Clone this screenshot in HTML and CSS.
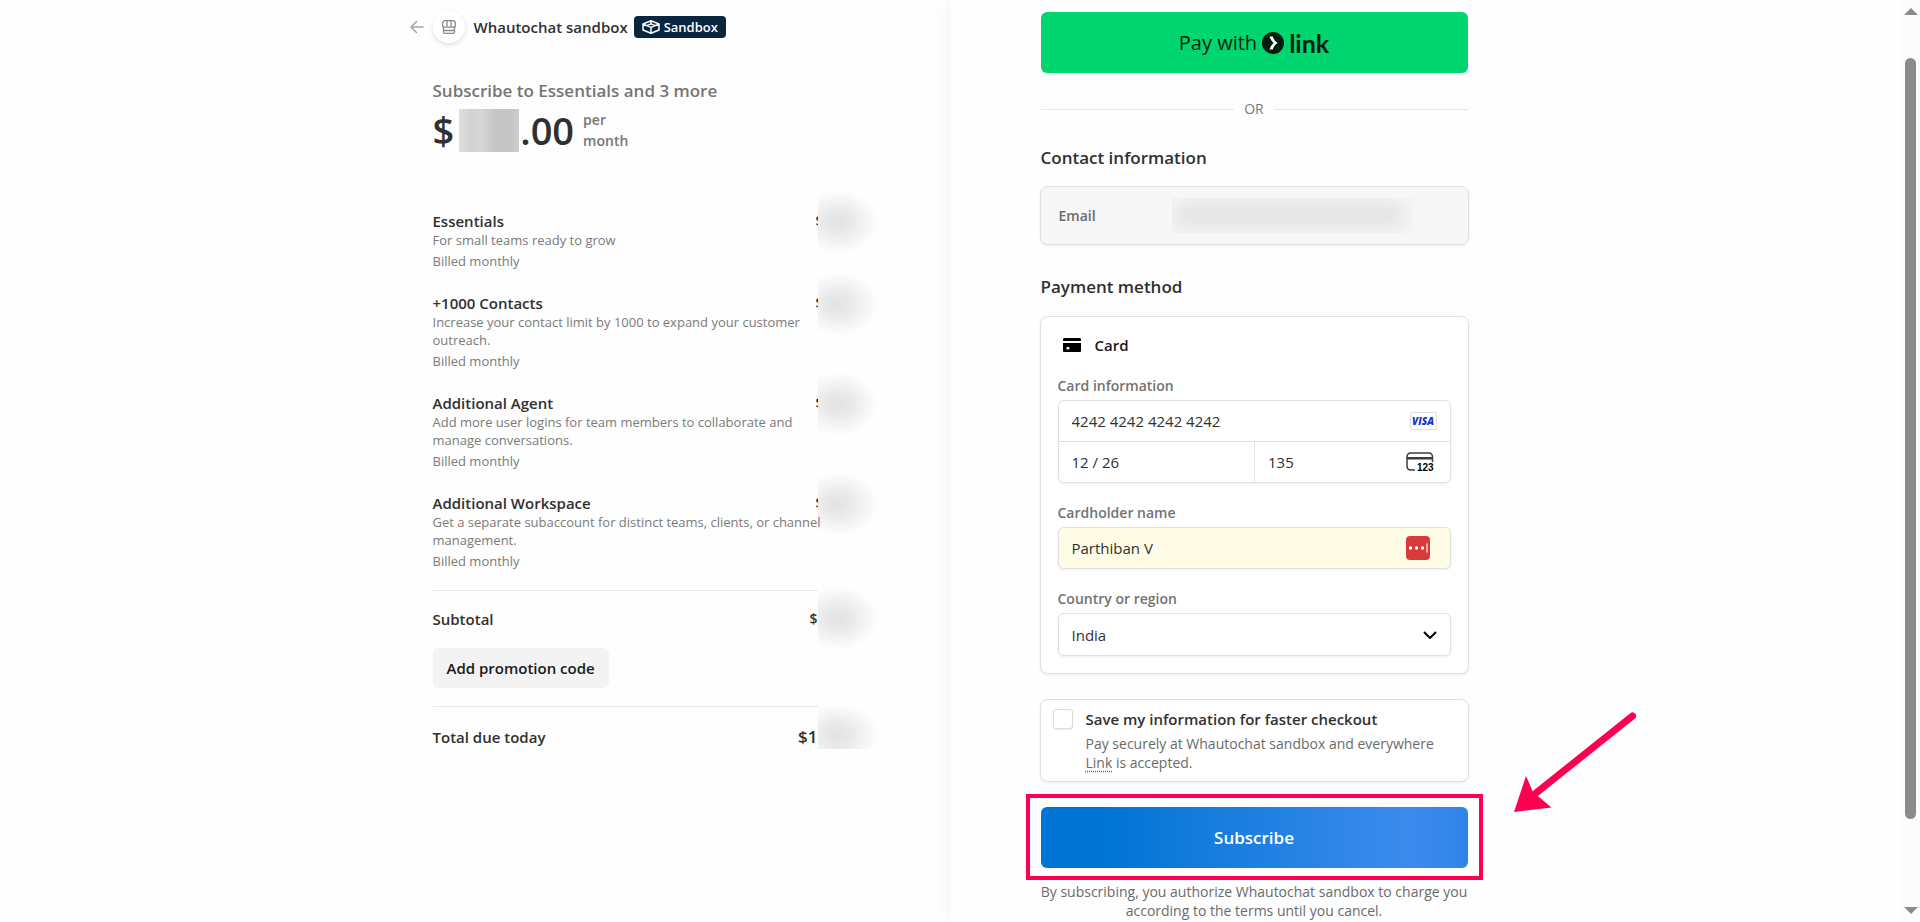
FILE: index.html
```html
<!DOCTYPE html>
<html lang="en">
  <head>
    <meta charset="UTF-8" />
    <meta name="viewport" content="width=device-width, initial-scale=1" />
    <title>Whautochat sandbox</title>
    <link rel="stylesheet" href="styles.css" />
  </head>
  <body>
    <div class="checkout">
      <section class="panel summary-panel">
        <div class="summary">
          <header class="merchant">
            <a href="#" class="back" aria-label="Back">
              <svg width="14" height="14" viewBox="0 0 14 14" fill="none" stroke="#a3a3a3" stroke-width="1.5" stroke-linecap="round" stroke-linejoin="round">
                <path d="M13 7H1M6.500 1.500L1 7l5.500 5.500" />
              </svg>
            </a>
            <span class="merchant-logo">
              <svg width="14" height="14" viewBox="0 0 14 14" fill="none" stroke="#8a8a8a" stroke-width="1.300" stroke-linejoin="round">
                <path d="M2.200.7h9.600l1.500 1.500v4a1 1 0 0 1-1 1H1.700a1 1 0 0 1-1-1v-4z" />
                <path d="M5 .7v6M9 .7v6M1.500 7v5.300a1 1 0 0 0 1 1h9a1 1 0 0 0 1-1V7M1.500 10.500h11" />
              </svg>
            </span>
            <span class="merchant-name">Whautochat sandbox</span>
            <span class="badge">
              <svg width="18" height="14" viewBox="0 0 18 14" fill="none" stroke="#fff" stroke-width="1.500" stroke-linejoin="round">
                <path d="M9 .8L17 4v6l-8 3.200L1 10V4zM1 4l8 3.400L17 4M9 7.400V13M5 5.600l4-1.700 4 1.700M9 .8v3" />
              </svg>
              Sandbox
            </span>
          </header>

          <h1 class="plan">Subscribe to Essentials and 3 more</h1>
          <div class="price">
            <span class="price-value">$<span class="price-hidden"></span>.00</span>
            <span class="price-period">per<br />month</span>
          </div>

          <div class="items">
            <div class="line item">
              <div class="line-body">
                <div class="row"><h2>Essentials</h2><span class="amount">$</span></div>
                <p>For small teams ready to grow</p>
                <p class="billing">Billed monthly</p>
              </div>
              <span class="hidden-amount"></span>
            </div>
            <div class="line item">
              <div class="line-body">
                <div class="row"><h2>+1000 Contacts</h2><span class="amount">$</span></div>
                <p>Increase your contact limit by 1000 to expand your customer outreach.</p>
                <p class="billing">Billed monthly</p>
              </div>
              <span class="hidden-amount"></span>
            </div>
            <div class="line item">
              <div class="line-body">
                <div class="row"><h2>Additional Agent</h2><span class="amount">$</span></div>
                <p>Add more user logins for team members to collaborate and manage conversations.</p>
                <p class="billing">Billed monthly</p>
              </div>
              <span class="hidden-amount"></span>
            </div>
            <div class="line item">
              <div class="line-body">
                <div class="row"><h2>Additional Workspace</h2><span class="amount">$</span></div>
                <p>Get a separate subaccount for distinct teams, clients, or channel management.</p>
                <p class="billing">Billed monthly</p>
              </div>
              <span class="hidden-amount"></span>
            </div>
          </div>

          <div class="line subtotal">
            <div class="line-body">
              <div class="row"><h2>Subtotal</h2><span class="amount">$</span></div>
              <button type="button" class="promo">Add promotion code</button>
            </div>
            <span class="hidden-amount"></span>
          </div>
          <div class="line total">
            <div class="line-body">
              <div class="row"><h2>Total due today</h2><span class="amount">$1</span></div>
            </div>
            <span class="hidden-amount"></span>
          </div>
        </div>
      </section>

      <main class="panel payment-panel">
        <form class="payment">
          <button type="button" class="link-pay">
            Pay with
            <svg width="22" height="22" viewBox="0 0 22 22">
              <circle cx="11" cy="11" r="11" fill="#011e0f" />
              <path d="M7.500 4.500h3.300c.7 2.700 2.500 5 4.900 6.500-2.400 1.500-4.200 3.800-4.900 6.500H7.500c.8-2.700 2.300-4.900 4.300-6.500-2-1.600-3.500-3.800-4.300-6.500z" fill="#fff" />
            </svg>
            <b>link</b>
          </button>
          <div class="or">OR</div>

          <h2 class="section-title">Contact information</h2>
          <div class="box contact">
            <span>Email</span>
            <span class="hidden-email"></span>
          </div>

          <h2 class="section-title">Payment method</h2>
          <div class="box method">
            <div class="method-title">
              <svg width="18" height="14" viewBox="0 0 18 14">
                <path d="M1 0h16a1 1 0 0 1 1 1v2H0V1a1 1 0 0 1 1-1z" />
                <path fill-rule="evenodd" d="M0 5h18v8a1 1 0 0 1-1 1H1a1 1 0 0 1-1-1zM4.500 9a1.200 1.200 0 0 0 0 2.400h.9a1.200 1.200 0 0 0 0-2.400z" />
              </svg>
              Card
            </div>

            <label for="card-number">Card information</label>
            <div class="field">
              <div class="input-row">
                <input type="text" id="card-number" value="4242 4242 4242 4242" />
                <span class="visa">VISA</span>
              </div>
              <div class="card-bottom">
                <div class="input-row"><input type="text" aria-label="Expiration" value="12 / 26" /></div>
                <div class="input-row cvc">
                  <input type="text" aria-label="CVC" value="135" />
                  <svg width="28" height="20" viewBox="0 0 28 20">
                    <path d="M9 18H4.500A3.500 3.500 0 0 1 1 14.500v-10A3.500 3.500 0 0 1 4.500 1h18.500A3.500 3.500 0 0 1 26.500 4.500V10" fill="none" stroke="#3c3c3c" stroke-width="1.500" />
                    <path d="M1 5h25.500v2.500H1z" fill="#3c3c3c" />
                    <text x="11" y="19" class="cvc-text">123</text>
                  </svg>
                </div>
              </div>
            </div>

            <label for="holder">Cardholder name</label>
            <div class="field input-row autofilled">
              <input type="text" id="holder" value="Parthiban V" />
              <svg width="24" height="24" viewBox="0 0 24 24">
                <rect width="24" height="24" rx="4" fill="#d73c3b" />
                <circle cx="4.500" cy="12" r="1.700" fill="#fff" />
                <circle cx="10.500" cy="12" r="1.700" fill="#fff" />
                <circle cx="16.500" cy="12" r="1.700" fill="#fff" />
                <path d="M21 7.500v9" stroke="#fff" stroke-width="1.200" />
              </svg>
            </div>

            <label for="country">Country or region</label>
            <div class="field input-row country">
              <select id="country">
                <option>India</option>
              </select>
              <svg width="14" height="8" viewBox="0 0 14 8" fill="none" stroke="#000" stroke-width="2">
                <path d="M1 1l6 6 6-6" />
              </svg>
            </div>
          </div>

          <div class="box save">
            <input type="checkbox" id="save-info" />
            <div>
              <label for="save-info">Save my information for faster checkout</label>
              <p>Pay securely at Whautochat sandbox and everywhere <a href="#">Link</a> is accepted.</p>
            </div>
          </div>

          <div class="submit">
            <button type="submit">Subscribe</button>
            <svg class="arrow" width="124" height="102" viewBox="0 0 124 102" fill="#ff0051">
              <path d="M118.500 4L22 81" stroke="#ff0051" stroke-width="7" stroke-linecap="round" />
              <path d="M0 100L12 64 19 80 37.500 95.500z" />
            </svg>
          </div>
          <p class="terms">By subscribing, you authorize Whautochat sandbox to charge you according to the terms until you cancel.</p>
        </form>
      </main>
    </div>

    <div class="scrollbar" aria-hidden="true">
      <span class="scroll-up"></span>
      <span class="scroll-thumb"></span>
      <span class="scroll-down"></span>
    </div>
  </body>
</html>
```

FILE: styles.css
```css
* {
  box-sizing: border-box;
}

body {
  margin: 0;
  height: 100vh;
  overflow: hidden;
  font-family: "Open Sans", "Noto Sans", sans-serif;
  font-size: 14px;
  line-height: 20px;
  color: #303030;
  background-color: #fefefe;
}

h1,
h2,
p {
  margin: 0;
}

h2 {
  font-size: 15px;
  font-weight: 600;
  line-height: 20px;
}

button,
input,
select {
  font-family: inherit;
}

.checkout {
  display: flex;
  min-height: 100vh;
  padding-right: 19px;
}

.panel {
  flex: none;
  width: 50%;
}

/* order summary */
.summary-panel {
  display: flex;
  justify-content: flex-end;
  padding: 10px 73px 0 0;
}

.summary {
  width: 100%;
  max-width: 445px;
}

.merchant {
  display: flex;
  align-items: center;
  height: 34px;
  margin-left: -23px;
}

.back {
  display: flex;
  margin-right: 9px;
}

.merchant-logo {
  display: flex;
  align-items: center;
  justify-content: center;
  width: 32px;
  height: 32px;
  margin-right: 9px;
  border-radius: 50%;
  background-color: #fff;
  box-shadow: 0 2px 5px rgba(0, 0, 0, 0.12);
}

.merchant-name {
  margin-right: 6px;
  font-size: 15px;
  font-weight: 600;
}

.badge {
  display: flex;
  align-items: center;
  gap: 4px;
  height: 22px;
  padding: 0 8px;
  border-radius: 4px;
  font-size: 13px;
  font-weight: 600;
  color: #fff;
  background-color: #0a2540;
}

.plan {
  margin-top: 35px;
  font-size: 17px;
  font-weight: 600;
  line-height: 24px;
  color: #757575;
}

.price {
  display: flex;
  align-items: center;
  gap: 9px;
  height: 54px;
}

.price-value {
  display: flex;
  align-items: center;
  font-size: 38px;
  font-weight: 600;
  line-height: 54px;
}

.price-hidden {
  width: 60px;
  height: 43px;
  margin: 0 1px 0 5px;
  background: linear-gradient(90deg, #dedede, #d2d2d2 20%, #d6d6d6 35%, #c6c6c6 60%, #c4c4c4 85%, #cecece);
}

.price-period {
  font-size: 14px;
  font-weight: 600;
  line-height: 21px;
  color: #757575;
}

.items {
  margin-top: 54px;
}

.line {
  display: grid;
  grid-template-columns: 1fr 60px;
}

.item {
  padding-bottom: 23px;
}

.item:last-child {
  padding-bottom: 20px;
}

/* descriptions may run slightly into the amounts column */
.item p {
  position: relative;
  z-index: 1;
  margin-right: -8px;
  font-size: 13px;
  line-height: 18px;
  color: #7a7a7a;
}

.item .billing {
  padding-top: 3px;
}

.row {
  display: flex;
  justify-content: space-between;
}

.amount {
  font-weight: 600;
}

.item .amount {
  margin-right: -6px;
}

/* sits on top of the amount's digits */
.hidden-amount {
  position: relative;
  height: 62px;
  margin-top: -20px;
  background: radial-gradient(ellipse 40px 32px at 20px 50%, #e3e3e3, #e9e9e9 35%, #f6f6f6 75%, #fefefe);
}

.subtotal .line-body,
.total .line-body {
  border-top: 1px solid #e6e6e6;
}

.subtotal .line-body {
  padding: 18px 0;
}

.subtotal .hidden-amount {
  margin-top: -3px;
}

.promo {
  height: 40px;
  margin-top: 19px;
  padding: 0 14px;
  border: none;
  border-radius: 6px;
  font-size: 15px;
  font-weight: 600;
  color: #1a1a1a;
  background-color: #f3f3f3;
}

.total .line-body {
  padding-top: 20px;
}

.total .amount {
  font-size: 17px;
}

.total .hidden-amount {
  height: 44px;
  margin-top: -1px;
  background: radial-gradient(ellipse 40px 32px at 20px 30px, #e3e3e3, #e9e9e9 35%, #f6f6f6 75%, #fefefe);
}

/* payment form */
.payment-panel {
  padding: 12px 90px 0;
  box-shadow: -6px 0 16px rgba(0, 0, 0, 0.03);
}

.payment {
  max-width: 427px;
}

.link-pay {
  display: flex;
  align-items: center;
  justify-content: center;
  gap: 5px;
  width: 100%;
  height: 61px;
  border: none;
  border-radius: 6px;
  font-size: 20px;
  font-weight: 500;
  color: #011e0f;
  background-color: #00d66f;
}

.link-pay b {
  font-family: Lato, sans-serif;
  font-size: 25px;
  line-height: 26px;
}

.or {
  display: flex;
  align-items: center;
  gap: 10px;
  margin: 26px 0 27px;
  color: #7a7a7a;
}

.or::before,
.or::after {
  content: "";
  flex: 1;
  height: 1px;
  background-color: #e6e6e6;
}

.section-title {
  font-size: 17px;
  font-weight: 600;
  line-height: 24px;
}

.box {
  margin: 0 -1px;
  border: 1px solid #e0e0e0;
  border-radius: 8px;
  background-color: #fff;
  box-shadow: 0 1px 3px rgba(0, 0, 0, 0.08);
}

.contact {
  display: flex;
  align-items: center;
  height: 59px;
  margin-top: 16px;
  margin-bottom: 30px;
  padding: 0 55px 0 18px;
  font-weight: 600;
  color: #6a6a6a;
  background-color: #f7f7f7;
}

.hidden-email {
  width: 241px;
  height: 35px;
  margin-left: auto;
  background-color: #e4e4e4;
  box-shadow: inset -4px 0 18px 5px #f5f5f5;
}

.method {
  margin-top: 17px;
  margin-bottom: 25px;
  padding: 18px 17px 17px;
}

.method-title {
  display: flex;
  align-items: center;
  gap: 14px;
  margin-bottom: 21px;
  padding-left: 5px;
  font-size: 15px;
  font-weight: 600;
  color: #1a1a1a;
}

.method label {
  display: block;
  margin-bottom: 4px;
  font-weight: 600;
  color: #727272;
}

.field {
  margin-bottom: 20px;
  border: 1px solid #e0e0e0;
  border-radius: 6px;
  overflow: hidden;
  box-shadow: 0 1px 3px rgba(0, 0, 0, 0.08);
}

.input-row {
  display: flex;
  align-items: center;
  min-width: 0;
  height: 40px;
  padding-right: 13px;
}

.input-row input,
.input-row select {
  flex: 1;
  min-width: 0;
  height: 100%;
  padding: 0 13px;
  border: none;
  font-size: 15px;
  color: #303030;
  background: transparent;
  appearance: none;
}

.input-row svg {
  flex: none;
}

.visa {
  flex: none;
  width: 27px;
  height: 18px;
  border: 1px solid #e0e0e0;
  border-radius: 2px;
  font-size: 10px;
  font-style: italic;
  font-weight: 800;
  line-height: 16px;
  text-align: center;
  color: #1434cb;
}

.card-bottom {
  display: grid;
  grid-template-columns: 1fr 1fr;
  border-top: 1px solid #e0e0e0;
}

.cvc {
  padding-right: 16px;
  border-left: 1px solid #e0e0e0;
}

.cvc-text {
  font-family: "Liberation Sans", sans-serif;
  font-size: 10px;
  font-weight: 700;
}

.autofilled {
  height: 42px;
  padding-right: 20px;
  background-color: #fffce6;
}

.country {
  height: 43px;
  margin-bottom: 0;
}

.save {
  display: flex;
  gap: 13px;
  min-height: 83px;
  margin-bottom: 25px;
  padding: 9px 30px 9px 12px;
}

.save input {
  flex: none;
  width: 20px;
  height: 20px;
  margin: 0;
  border: 1px solid #dcdcdc;
  border-radius: 3px;
  background-color: #fff;
  box-shadow: 0 1px 2px rgba(0, 0, 0, 0.08);
  appearance: none;
}

.save label {
  font-size: 15px;
  font-weight: 600;
}

.save p {
  margin-top: 4px;
  line-height: 19px;
  color: #6a6a6a;
}

.save a {
  color: inherit;
  text-decoration: underline dotted;
  text-underline-offset: 3px;
}

.submit {
  position: relative;
}

.submit::before {
  content: "";
  position: absolute;
  inset: -13px -15px -12px;
  border: 4px solid #ff0051;
}

.submit button {
  display: block;
  width: 100%;
  height: 61px;
  border: none;
  border-radius: 6px;
  font-size: 17px;
  font-weight: 600;
  color: #fff;
  background: linear-gradient(90deg, #0074d4 14%, #3c8bee 86%, #2f84e8);
}

/* callout pointing at the subscribe button */
.arrow {
  position: absolute;
  left: calc(100% + 46px);
  bottom: 54px;
}

.terms {
  margin-top: 14px;
  line-height: 19px;
  text-align: center;
  color: #6a6a6a;
}

.scrollbar {
  position: fixed;
  top: 0;
  right: 0;
  bottom: 0;
  display: flex;
  flex-direction: column;
  align-items: center;
  width: 19px;
  padding: 8px 0;
  background-color: #fcfcfc;
}

.scroll-up,
.scroll-down {
  border: 7px solid transparent;
}

.scroll-up {
  border-top: none;
  border-bottom-color: #8b8b8b;
}

.scroll-down {
  margin-top: auto;
  border-bottom: none;
  border-top-color: #8b8b8b;
}

.scroll-thumb {
  width: 11px;
  height: 84%;
  margin-top: 43px;
  border-radius: 6px;
  background-color: #8b8b8b;
}
```
